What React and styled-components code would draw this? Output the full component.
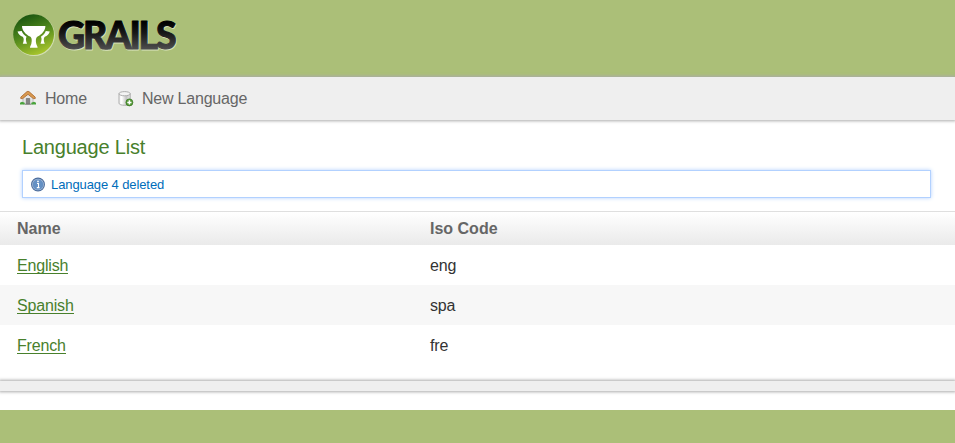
import React from "react";
import styled, { createGlobalStyle } from "styled-components";

const GlobalStyle = createGlobalStyle`
  * { box-sizing: border-box; }
  body {
    margin: 0;
    background: #abbf78;
    color: #333;
    font: 16px/20px "Liberation Sans", Arial, sans-serif;
  }
`;

const Page = styled.div`
  height: 410px;
  background: #fff;
  overflow: hidden;
`;

const Header = styled.header`
  height: 77px;
  padding: 10px 0 0 10px;
  background: #abbf78;
`;

const Logo = styled.svg`
  display: block;
  width: 180px;
  height: 60px;
  overflow: visible;
`;

const Nav = styled.nav`
  position: relative;
  display: flex;
  gap: 31px;
  height: 43px;
  padding: 12px 20px 0;
  background: #efefef;
  box-shadow: 0 0 3px 1px #aaa;
`;

const NavLink = styled.a`
  display: flex;
  gap: 9px;
  height: 20px;
  color: #666;
  letter-spacing: -0.2px;
  text-decoration: none;
`;

const Icon = styled.svg`
  flex: none;
  width: 16px;
  height: 16px;
  margin-top: ${(p) => p.$top || 0}px;
  margin-right: ${(p) => (p.$tight ? -1 : 0)}px;
`;

const Title = styled.h1`
  margin: 16px 22px 0;
  font-size: 20px;
  font-weight: 400;
  line-height: 22px;
  letter-spacing: -0.2px;
  color: #48802c;
`;

const Message = styled.div`
  display: flex;
  gap: 5px;
  height: 28px;
  margin: 12px 24px 13px 22px;
  padding: 6px 7px;
  border: 1px solid #b2d1ff;
  box-shadow: 0 0 4px #b2d1ff;
  font-size: 13px;
  line-height: 16px;
  letter-spacing: -0.1px;
  color: #006dba;
`;

const Table = styled.div`
  border-top: 1px solid #dfdfdf;
`;

const Row = styled.div`
  display: grid;
  grid-template-columns: 413px 1fr;
  height: 40px;
  padding: 2px 17px 0;
  align-items: center;
  letter-spacing: -0.17px;
  background: ${(p) => (p.$odd ? "#f7f7f7" : "#fff")};
`;

const HeadRow = styled(Row)`
  height: 33px;
  padding-top: 0;
  letter-spacing: 0;
  background: linear-gradient(#fff, #eaeaea);
  font-weight: 700;
  color: #666;
`;

const ItemLink = styled.a`
  display: inline-block;
  height: 17px;
  margin: 1px 0 2px;
  color: #48802c;
  text-decoration: none;
  border-bottom: 1px solid #48802c;
  line-height: 18px;
  vertical-align: top;
`;

const Pagination = styled.div`
  height: 10px;
  margin-top: 16px;
  background: #efefef;
  box-shadow: 0 0 3px 1px #aaa;
`;

const languages = [
  ["English", "eng"],
  ["Spanish", "spa"],
  ["French", "fre"],
];

function GrailsLogo() {
  return (
    <Logo viewBox="0 0 180 60" role="img" aria-label="Grails">
      <defs>
        <linearGradient id="disc" x1="0.25" y1="0" x2="0.65" y2="1">
          <stop offset="0" stopColor="#15500f" />
          <stop offset="0.45" stopColor="#4b841b" />
          <stop offset="1" stopColor="#abc72e" />
        </linearGradient>
        <linearGradient id="ink" gradientUnits="userSpaceOnUse" x1="0" y1="12" x2="0" y2="40">
          <stop offset="0" stopColor="#000" />
          <stop offset="0.4" stopColor="#181818" />
          <stop offset="1" stopColor="#505050" />
        </linearGradient>
      </defs>
      <circle cx="24.2" cy="25.4" r="20.6" fill="#d3dfb4" />
      <circle cx="23.6" cy="24.6" r="20.4" fill="url(#disc)" />
      <g fill="#fff">
        <path d="M12 16H35.4C35.3 20.5 32 24.2 27.6 26.6C25.5 27.9 25.6 31 26.3 34C26.8 35.6 27.6 36.2 27.6 37.8H20C20 36.2 20.8 35.6 21.3 34C22 31 22.1 27.9 20 26.6C15.5 24.2 12.1 20.5 12 16Z" />
        <path d="M7.5 21.4L11.7 21C12.6 23.3 14.2 25.3 16.6 26.8C15.6 28.3 15.7 30.4 17 33.8H12.8C13.9 31 14.2 28 12.7 26.8C10.2 26 8.2 23.8 7.5 21.4Z" />
        <path d="M39.8 21.4L35.8 21C34.9 23.3 33.3 25.3 30.9 26.8C31.9 28.3 31.8 30.4 30.5 33.8H34.8C33.6 31 33.3 28 34.8 26.8C37.3 26 39.1 23.8 39.8 21.4Z" />
      </g>
      <g fontFamily="Lato, sans-serif" fontWeight="900" fontSize="37.5" letterSpacing="-2.15" strokeWidth="1" strokeLinejoin="round">
        <text x="48.7" y="39.8" fill="#d7e1bb" stroke="#d7e1bb">GRAILS</text>
        <text x="48" y="39" fill="url(#ink)" stroke="url(#ink)">GRAILS</text>
      </g>
    </Logo>
  );
}

function HomeIcon() {
  return (
    <Icon viewBox="0 0 16 16" $top={1}>
      <path d="M3 7L8 3L13 7V14H3Z" fill="#e5e5e5" stroke="#aaa" strokeWidth=".7" />
      <path d="M0.8 8.6V7.1L7.1 1.5H8.9L15.2 7.1V8.6H13.3L8 4.3L2.7 8.6Z" fill="#d99a50" stroke="#a8652b" strokeWidth=".8" />
      <path d="M6.3 14V8.5H9.7V14Z" fill="#858585" stroke="#666" strokeWidth=".6" />
      <path d="M0 14.5V12.7L2 11.8L4.7 12.7V14.5ZM11.3 14.5V12.7L14 11.8L16 12.7V14.5Z" fill="#48a33b" />
      <path d="M5 14.4H11" stroke="#888" strokeWidth=".8" />
    </Icon>
  );
}

function DatabaseAddIcon() {
  return (
    <Icon viewBox="0 0 16 16" $top={2} $tight>
      <defs>
        <linearGradient id="cylinder">
          <stop offset="0" stopColor="#f0f0f0" />
          <stop offset="0.25" stopColor="#fff" />
          <stop offset="0.65" stopColor="#c4c4c4" />
          <stop offset="1" stopColor="#e6e6e6" />
        </linearGradient>
      </defs>
      <path d="M1 2.6V12.2C1 15 12.2 15 12.2 12.2V2.6Z" fill="url(#cylinder)" stroke="#a5a5a5" strokeWidth=".9" />
      <ellipse cx="6.6" cy="2.7" rx="5.6" ry="2.1" fill="#f4f4f4" stroke="#a5a5a5" strokeWidth=".9" />
      <circle cx="11.4" cy="11.4" r="3.5" fill="#539a35" stroke="#397423" strokeWidth=".7" />
      <path d="M11.4 9.3V13.5M9.3 11.4H13.5" stroke="#fff" strokeWidth="1.5" />
    </Icon>
  );
}

function InfoIcon() {
  return (
    <Icon viewBox="0 0 16 16">
      <circle cx="8" cy="7.5" r="6.4" fill="#b3c5dc" stroke="#4b6c9d" strokeWidth="1.1" />
      <circle cx="8" cy="7.5" r="5.3" fill="#6490c4" />
      <path d="M7 6.5H8.5V10.5M6.8 10.6H9.6" fill="none" stroke="#fff" strokeWidth="1.1" />
      <circle cx="8" cy="4.4" r=".9" fill="#fff" />
    </Icon>
  );
}

export default function App() {
  return (
    <>
      <GlobalStyle />
      <Page>
        <Header><GrailsLogo /></Header>
        <Nav>
          <NavLink><HomeIcon />Home</NavLink>
          <NavLink><DatabaseAddIcon />New Language</NavLink>
        </Nav>
        <Title>Language List</Title>
        <Message role="status"><InfoIcon />Language 4 deleted</Message>
        <Table>
          <HeadRow><span>Name</span><span>Iso Code</span></HeadRow>
          {languages.map(([name, code], i) => (
            <Row key={code} $odd={i % 2 === 1}>
              <span><ItemLink>{name}</ItemLink></span>
              <span>{code}</span>
            </Row>
          ))}
        </Table>
        <Pagination />
      </Page>
    </>
  );
}
